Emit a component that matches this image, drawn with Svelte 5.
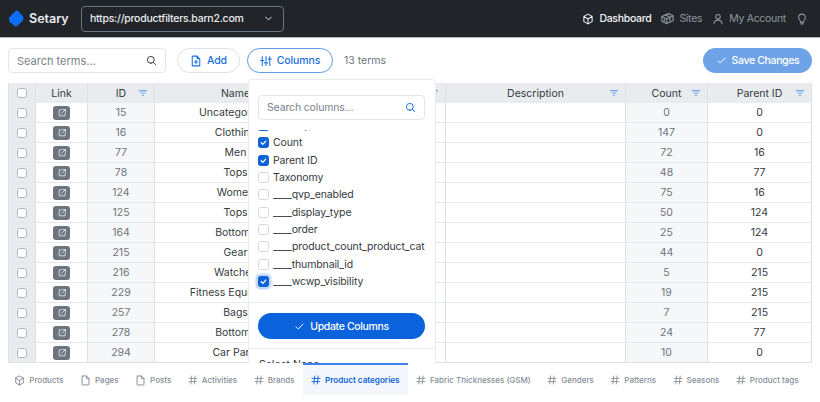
<script>
  const icons = {
    box: 'M8 1.500l5.500 3v7L8 14.500l-5.500-3v-7zM2.500 4.500L8 8l5.500-3.500M8 8v6.500',
    sites: 'M9 2l6 2.500v6L7 14.500l-6-3v-6zM1 5.500l6 3 8-4M7 8.500v6M5 3.500l6 3v5M4 9v3',
    user: 'M8 8a3 3 0 1 0 0-6 3 3 0 0 0 0 6zM2.500 14.500c.5-3.500 2.500-5 5.500-5s5 1.500 5.500 5',
    bulb: 'M6.500 14.500h3M5.800 10.500C4.800 9.500 3.500 8.300 3.500 6a4.500 4.500 0 0 1 9 0c0 2.300-1.300 3.500-2.300 4.500l-.2 2H6z',
    search: 'M7 12A5 5 0 1 0 7 2a5 5 0 0 0 0 10zM10.700 10.700L14 14',
    fileplus: 'M4 1.500h5.500L13 5v9.500H3V2.500a1 1 0 0 1 1-1zM9.500 1.500V5H13M8 7v4.500M5.800 9.200h4.400',
    sliders: 'M3 2v4M3 9v5M8 2v7M8 12v2M13 2v2M13 7v7M1 7.500h4M6 10.500h4M11 5.500h4',
    check: 'M3 8.500l3.200 3.200L13 4.500',
    external: 'M7 3H3.500v9.500H13V9M9 2.500h4.500V7M13.500 2.500L7.500 8.500',
    file: 'M4 1.500h5.500L13 5v9a.5.5 0 0 1-.5.5h-9A.5.5 0 0 1 3 14V2.500a1 1 0 0 1 1-1zM9.500 1.500V5H13',
    hash: 'M6 1.500L4.500 14.500M11.500 1.500L10 14.500M2 5.500h12.500M1.500 10.500H14',
    chevron: 'M4 6l4 4 4-4',
  };

  const rows = [
    { id: 15, name: 'Uncategorized', count: 0, parent: 0 },
    { id: 16, name: 'Clothing', count: 147, parent: 0 },
    { id: 77, name: 'Men', count: 72, parent: 16 },
    { id: 78, name: 'Tops', count: 48, parent: 77 },
    { id: 124, name: 'Women', count: 75, parent: 16 },
    { id: 125, name: 'Tops', count: 50, parent: 124 },
    { id: 164, name: 'Bottoms', count: 25, parent: 124 },
    { id: 215, name: 'Gear', count: 44, parent: 0 },
    { id: 216, name: 'Watches', count: 5, parent: 215 },
    { id: 229, name: 'Fitness Equipment', count: 19, parent: 215 },
    { id: 257, name: 'Bags', count: 7, parent: 215 },
    { id: 278, name: 'Bottoms', count: 24, parent: 77 },
    { id: 294, name: 'Car Parts', count: 10, parent: 0 },
  ];

  const columns = [
    { label: 'Description', on: true },
    { label: 'Count', on: true },
    { label: 'Parent ID', on: true },
    { label: 'Taxonomy', on: false },
    { label: '____qvp_enabled', on: false },
    { label: '____display_type', on: false },
    { label: '____order', on: false },
    { label: '____product_count_product_cat', on: false },
    { label: '____thumbnail_id', on: false },
    { label: '____wcwp_visibility', on: true, focus: true },
  ];

  const tabs = [
    { label: 'Products', icon: 'box' },
    { label: 'Pages', icon: 'file' },
    { label: 'Posts', icon: 'file' },
    { label: 'Activities', icon: 'hash' },
    { label: 'Brands', icon: 'hash' },
    { label: 'Product categories', icon: 'hash', active: true },
    { label: 'Fabric Thicknesses (GSM)', icon: 'hash' },
    { label: 'Genders', icon: 'hash' },
    { label: 'Patterns', icon: 'hash' },
    { label: 'Seasons', icon: 'hash' },
    { label: 'Product tags', icon: 'hash' },
  ];
</script>

{#snippet icon(name, size = 12)}
  <svg class="icon" width={size} height={size} viewBox="0 0 16 16"><path d={icons[name]} /></svg>
{/snippet}

{#snippet filter()}
  <svg class="filter" width="8" height="6" viewBox="0 0 8 6"><path d="M0 .6h8M1.600 3h4.800M3.200 5.400h1.600" /></svg>
{/snippet}

<header class="topbar">
  <div class="brand">
    <svg width="15" height="17" viewBox="0 0 15 17"><path class="logo" d="M8 2l5 5.500-.5 2.500L7 15l-5-4-.5-2.500L4.500 5z" /></svg>
    <span>Setary</span>
  </div>
  <div class="site-select">
    <span>https://productfilters.barn2.com</span>
    {@render icon('chevron', 11)}
  </div>
  <nav class="topnav">
    <a class="current" href="#dashboard">{@render icon('box', 12)}Dashboard</a>
    <a href="#sites">{@render icon('sites', 13)}Sites</a>
    <a href="#account">{@render icon('user', 12)}My Account</a>
    <a href="#tips" aria-label="Tips">{@render icon('bulb', 12)}</a>
  </nav>
</header>

<main class="content">
  <div class="toolbar">
    <label class="search">
      <input placeholder="Search terms..." />
      {@render icon('search', 11)}
    </label>
    <button class="pill add">{@render icon('fileplus', 12)}Add</button>
    <button class="pill columns">{@render icon('sliders', 12)}Columns</button>
    <span class="total">13 terms</span>
    <button class="save">{@render icon('check', 11)}Save Changes</button>
  </div>

  <div class="table">
    <div class="row head">
      <div class="cell"><input type="checkbox" class="box" /></div>
      <div class="cell">Link</div>
      <div class="cell">ID{@render filter()}</div>
      <div class="cell">Name{@render filter()}</div>
      <div class="cell">Slug{@render filter()}</div>
      <div class="cell">Description{@render filter()}</div>
      <div class="cell">Count{@render filter()}</div>
      <div class="cell">Parent ID{@render filter()}</div>
    </div>
    {#each rows as row}
      <div class="row">
        <div class="cell pick"><input type="checkbox" class="box" /></div>
        <div class="cell"><span class="open">{@render icon('external', 10)}</span></div>
        <div class="cell muted">{row.id}</div>
        <div class="cell">{row.name}</div>
        <div class="cell"></div>
        <div class="cell"></div>
        <div class="cell muted">{row.count}</div>
        <div class="cell">{row.parent}</div>
      </div>
    {/each}
  </div>

  <div class="popup">
    <div class="popup-search">
      <label class="search">
        <input placeholder="Search columns..." />
        {@render icon('search', 11)}
      </label>
    </div>
    <div class="list">
      {#each columns as col}
        <label class="option">
          <input type="checkbox" class="box" class:ring={col.focus} checked={col.on} />
          <span>{col.label}</span>
        </label>
      {/each}
    </div>
    <div class="popup-action">
      <button class="update">{@render icon('check', 11)}Update Columns</button>
    </div>
    <div class="select-all">Select None</div>
  </div>
</main>

<footer class="tabs">
  {#each tabs as tab}
    <a class="tab" class:active={tab.active} href="#tab">{@render icon(tab.icon, tab.icon === 'hash' ? 10 : 11)}{tab.label}</a>
  {/each}
</footer>

<style>
  :global(body) {
    background: #fff;
    font-family: Inter, 'Liberation Sans', sans-serif;
    font-size: 11px;
    color: #343a40;
  }

  .icon {
    flex: none;
    fill: none;
    stroke: currentColor;
    stroke-width: 1.4;
    stroke-linecap: round;
    stroke-linejoin: round;
  }

  .topbar {
    display: flex;
    align-items: center;
    height: 38px;
    padding: 0 9px;
    box-sizing: border-box;
    background: #212529;
    border-bottom: 1px solid #b4b6b8;
    color: #fff;
  }

  .brand {
    display: flex;
    align-items: center;
    gap: 5px;
    width: 72px;
    font-size: 12.500px;
    font-weight: 600;
    color: #e9ecef;
  }

  .logo {
    fill: #0d6efd;
    stroke: #0d6efd;
    stroke-width: 3;
    stroke-linejoin: round;
  }

  .site-select {
    display: flex;
    align-items: center;
    justify-content: space-between;
    width: 203px;
    height: 26px;
    padding: 0 9px 0 8px;
    box-sizing: border-box;
    border: 1px solid #6c757d;
    border-radius: 4px;
    font-size: 10.500px;
    font-weight: 500;
    letter-spacing: -0.25px;
    color: #e9ecef;
  }

  .topnav {
    display: flex;
    align-items: center;
    gap: 10px;
    margin-left: auto;
    padding-right: 3px;
  }

  .topnav a {
    display: flex;
    align-items: center;
    gap: 5px;
    font-size: 10.500px;
    letter-spacing: -0.3px;
    color: #8f959b;
    text-decoration: none;
  }

  .topnav a.current {
    color: #f1f3f5;
    font-weight: 500;
  }

  .content {
    position: relative;
    height: 325px;
    padding: 10px 8px 0;
    box-sizing: border-box;
    overflow: hidden;
  }

  .toolbar {
    display: flex;
    align-items: center;
    height: 25px;
    margin-bottom: 10px;
  }

  .search {
    display: flex;
    align-items: center;
    height: 25px;
    padding: 0 8px;
    box-sizing: border-box;
    border: 1px solid #e2e6ea;
    border-radius: 4px;
    background: #fff;
    color: #343a40;
  }

  .toolbar .search {
    width: 158px;
    margin-right: 11px;
  }

  .search input {
    flex: 1;
    min-width: 0;
    padding: 0;
    border: 0;
    outline: 0;
    background: none;
    font: inherit;
    font-size: 10.500px;
  }

  .toolbar .search input {
    font-size: 11px;
  }

  .popup .search input {
    letter-spacing: -0.15px;
  }

  .search input::placeholder {
    color: #7a828a;
    opacity: 1;
  }

  .pill {
    display: flex;
    align-items: center;
    justify-content: center;
    gap: 5px;
    height: 25px;
    padding: 0;
    border: 1px solid #dee2e6;
    border-radius: 13px;
    background: #fff;
    font: inherit;
    font-size: 10.500px;
    font-weight: 500;
    letter-spacing: -0.1px;
    color: #1a6fe0;
  }

  .add {
    width: 63px;
    margin-right: 7px;
  }

  .columns {
    width: 86px;
    border-color: #5f9bec;
  }

  .total {
    margin-left: 11px;
    font-size: 10.500px;
    color: #6c757d;
  }

  .save {
    display: flex;
    align-items: center;
    justify-content: center;
    gap: 5px;
    width: 109px;
    height: 25px;
    margin-left: auto;
    padding: 0;
    border: 0;
    border-radius: 13px;
    background: #6ea3e8;
    font: inherit;
    font-size: 10.500px;
    font-weight: 500;
    letter-spacing: -0.35px;
    color: #fff;
  }

  .table {
    border: 1px solid #dee2e6;
    border-top: 0;
    height: 280px;
    box-sizing: border-box;
  }

  .row {
    display: grid;
    grid-template-columns: 27px 52px 67px 162px 129px 180px 82px 1fr;
    height: 20px;
    box-sizing: border-box;
    border-bottom: 1px solid #e4e7eb;
  }

  .row:last-child {
    height: 19px;
    border-bottom: 0;
  }

  .head {
    background: #e9ecef;
    border-bottom: 0;
    font-weight: 400;
  }

  .cell {
    position: relative;
    display: flex;
    align-items: center;
    justify-content: center;
    border-right: 1px solid #dee2e6;
    font-size: 10.500px;
    white-space: nowrap;
    overflow: hidden;
  }

  .cell:last-child {
    border-right: 0;
  }

  .pick {
    background: #e9ecef;
  }

  .muted {
    background: #f6f7f9;
    color: #6c757d;
  }

  .filter {
    position: absolute;
    right: 7px;
    top: 7px;
    fill: none;
    stroke: #6ea3f0;
    stroke-width: 1.100;
  }

  .box {
    flex: none;
    appearance: none;
    width: 10px;
    height: 10px;
    margin: 0;
    box-sizing: border-box;
    border: 1px solid #adb5bd;
    border-radius: 2.500px;
    background: #fff;
  }

  .box:checked {
    border-color: #0d62d8;
    background: #0d62d8 url("data:image/svg+xml,%3Csvg xmlns='http://www.w3.org/2000/svg' viewBox='0 0 16 16'%3E%3Cpath d='M4 8.500l2.800 2.800L12 5.500' fill='none' stroke='white' stroke-width='2.400' stroke-linecap='round' stroke-linejoin='round'/%3E%3C/svg%3E") center / 100% no-repeat;
  }

  .ring {
    box-shadow: 0 0 0 2.500px #c5dafa;
  }

  .open {
    display: flex;
    align-items: center;
    justify-content: center;
    width: 17px;
    height: 14px;
    border-radius: 3px;
    background: #6c757d;
    color: #dfe3e7;
  }

  .popup {
    position: absolute;
    left: 248px;
    top: 41px;
    width: 188px;
    box-sizing: border-box;
    border: 1px solid #e9ecef;
    border-radius: 4px 4px 0 0;
    background: #fff;
  }

  .popup-search {
    padding: 15px 10px 0 9px;
  }

  .popup-search .search {
    color: #1a6fe0;
  }

  .list {
    height: 162px;
    margin: 10px 0 0;
    padding: 0 0 0 9px;
    overflow: hidden;
  }

  .option {
    display: flex;
    align-items: center;
    gap: 4px;
    height: 17.330px;
    font-size: 10.500px;
    letter-spacing: -0.12px;
    white-space: nowrap;
  }

  .option:first-child {
    margin-top: -13px;
  }

  .option .box {
    width: 11px;
    height: 11px;
    border-color: #d5d9dd;
  }

  .option .box:checked {
    border-color: #0d62d8;
  }

  .popup-action {
    margin-top: 10px;
    padding: 10px 10px 9px 9px;
    border-top: 1px solid #e9ecef;
    border-bottom: 1px solid #e9ecef;
  }

  .update {
    display: flex;
    align-items: center;
    justify-content: center;
    gap: 5px;
    width: 100%;
    height: 26px;
    padding: 0;
    border: 0;
    border-radius: 13px;
    background: #0a62dc;
    font: inherit;
    font-size: 10.500px;
    font-weight: 500;
    letter-spacing: -0.35px;
    color: #fff;
  }

  .select-all {
    padding: 9px 10px;
    font-size: 10.500px;
  }

  .tabs {
    display: flex;
    height: 32px;
    padding-left: 6px;
  }

  .tab {
    display: flex;
    align-items: center;
    gap: 4px;
    padding: 0 8.250px;
    box-sizing: border-box;
    border-top: 2px solid transparent;
    font-size: 8px;
    font-weight: 500;
    color: #868e96;
    text-decoration: none;
    white-space: nowrap;
  }

  .tab.active {
    border-top-color: #3b82e8;
    background: #f3f7fc;
    color: #0d62d8;
    font-size: 8.100px;
    font-weight: 600;
  }
</style>
